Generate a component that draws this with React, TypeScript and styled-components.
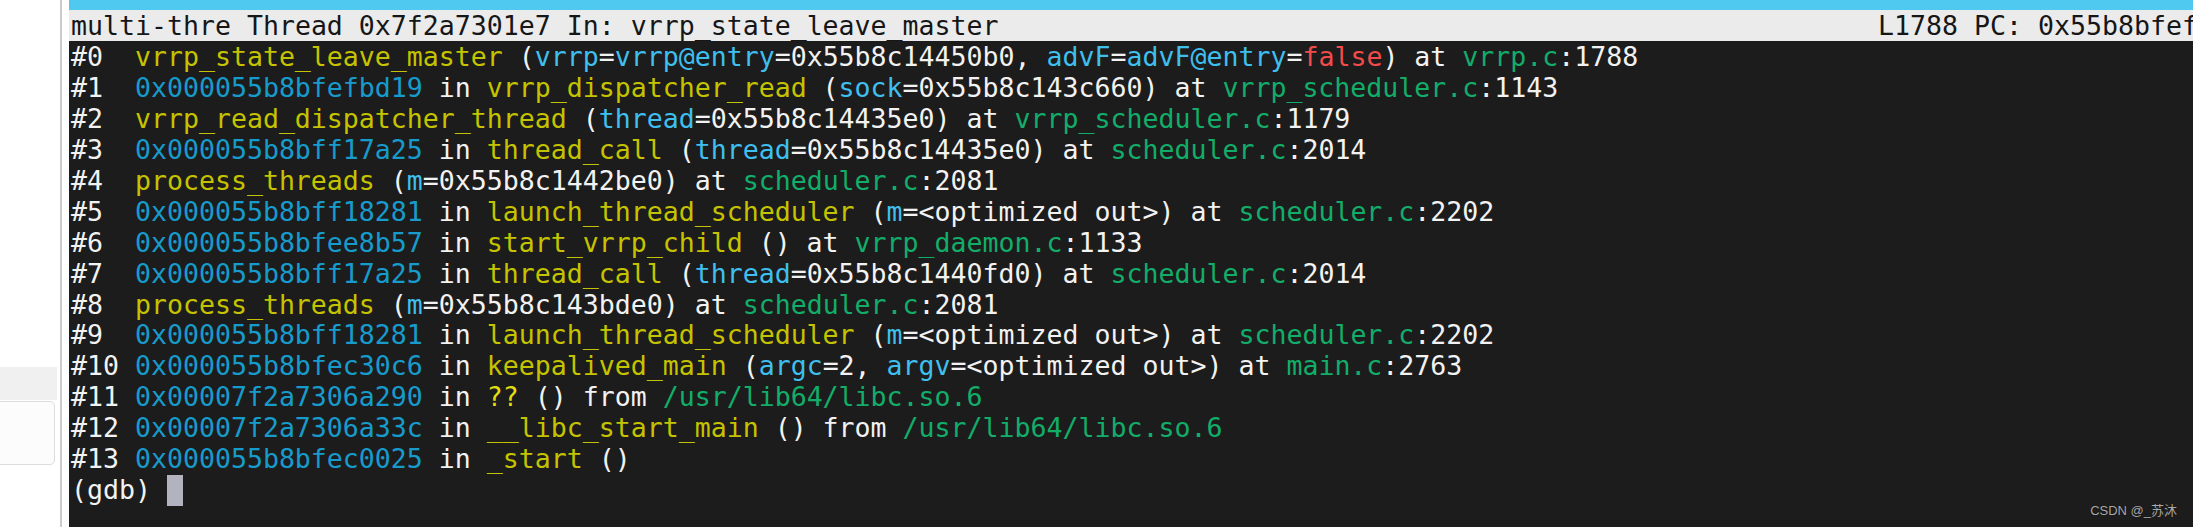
import React from "react";
import styled, { createGlobalStyle } from "styled-components";

const Global = createGlobalStyle`
  html, body { margin: 0; padding: 0; overflow: hidden; background: #ffffff; }
  #root { width: 2193px; height: 527px; }
`;

type Tone = "plain" | "func" | "addr" | "arg" | "file" | "bad" | "unknown";

const toneColor: Record<Tone, string> = {
  plain: "#f2f2f2",
  func: "#c5c300",
  addr: "#179bcc",
  arg: "#3fbfee",
  file: "#13ad6a",
  bad: "#f24b4b",
  unknown: "#e0de10",
};

const Page = styled.div`
  display: flex;
  width: 2193px;
  height: 527px;
  overflow: hidden;
`;

const Sidebar = styled.aside`
  display: flex;
  flex: 0 0 69px;
  background: #ffffff;
`;

const SideContent = styled.div`
  display: flex;
  flex-direction: column;
  width: 60px;
  padding-top: 367px;
  box-sizing: border-box;
`;

const SideTab = styled.div`
  width: 57px;
  height: 33px;
  background: #f0f0f0;
`;

const SideCard = styled.div`
  margin-left: -8px;
  margin-top: 1px;
  width: 63px;
  height: 64px;
  box-sizing: border-box;
  border: 1px solid #dcdcdc;
  border-radius: 5px;
  background: #fcfcfc;
`;

const Divider = styled.div`
  flex: 0 0 2px;
  background: #cbcbcb;
`;

const Terminal = styled.main`
  position: relative;
  flex: 1 1 0;
  min-width: 0;
  display: flex;
  flex-direction: column;
  background: #1c1c1c;
  font-family: "DejaVu Sans Mono", monospace;
  font-size: 26.57px;
  line-height: 30.95px;
  overflow: hidden;
`;

const TopStripe = styled.div`
  flex: 0 0 10px;
  background: #4fc9ef;
`;

const StatusBar = styled.div`
  display: grid;
  grid-template-columns: 113ch auto;
  height: 31px;
  line-height: 31px;
  padding-left: 2px;
  background: #ebebeb;
  color: #161616;
  white-space: pre;
`;

const Output = styled.div`
  display: flex;
  flex-direction: column;
  margin-top: 1px;
  padding-left: 2px;
`;

const Line = styled.div`
  display: flex;
  white-space: pre;
  height: 30.95px;
  color: ${toneColor.plain};
`;

const FrameNo = styled.span`
  flex: 0 0 4ch;
  color: ${toneColor.plain};
`;

const Seg = styled.span<{ $tone: Tone }>`
  color: ${(p) => toneColor[p.$tone]};
`;

const Cursor = styled.span`
  display: inline-block;
  width: 16px;
  height: 31px;
  background: #b3b3c0;
`;

const Watermark = styled.div`
  position: absolute;
  right: 16px;
  bottom: 7px;
  font-family: "Liberation Sans", "Noto Sans CJK SC", sans-serif;
  font-size: 13px;
  line-height: 18px;
  color: #a8a8a8;
  text-shadow: 0 0 1px rgba(0, 0, 0, 0.6);
`;

type S = [Tone, string];

const frames: S[][] = [
  [["func", "vrrp_state_leave_master"], ["plain", " ("], ["arg", "vrrp"], ["plain", "="], ["arg", "vrrp@entry"], ["plain", "=0x55b8c14450b0, "], ["arg", "advF"], ["plain", "="], ["arg", "advF@entry"], ["plain", "="], ["bad", "false"], ["plain", ") at "], ["file", "vrrp.c"], ["plain", ":1788"]],
  [["addr", "0x000055b8bfefbd19"], ["plain", " in "], ["func", "vrrp_dispatcher_read"], ["plain", " ("], ["arg", "sock"], ["plain", "=0x55b8c143c660) at "], ["file", "vrrp_scheduler.c"], ["plain", ":1143"]],
  [["func", "vrrp_read_dispatcher_thread"], ["plain", " ("], ["arg", "thread"], ["plain", "=0x55b8c14435e0) at "], ["file", "vrrp_scheduler.c"], ["plain", ":1179"]],
  [["addr", "0x000055b8bff17a25"], ["plain", " in "], ["func", "thread_call"], ["plain", " ("], ["arg", "thread"], ["plain", "=0x55b8c14435e0) at "], ["file", "scheduler.c"], ["plain", ":2014"]],
  [["func", "process_threads"], ["plain", " ("], ["arg", "m"], ["plain", "=0x55b8c1442be0) at "], ["file", "scheduler.c"], ["plain", ":2081"]],
  [["addr", "0x000055b8bff18281"], ["plain", " in "], ["func", "launch_thread_scheduler"], ["plain", " ("], ["arg", "m"], ["plain", "=<optimized out>) at "], ["file", "scheduler.c"], ["plain", ":2202"]],
  [["addr", "0x000055b8bfee8b57"], ["plain", " in "], ["func", "start_vrrp_child"], ["plain", " () at "], ["file", "vrrp_daemon.c"], ["plain", ":1133"]],
  [["addr", "0x000055b8bff17a25"], ["plain", " in "], ["func", "thread_call"], ["plain", " ("], ["arg", "thread"], ["plain", "=0x55b8c1440fd0) at "], ["file", "scheduler.c"], ["plain", ":2014"]],
  [["func", "process_threads"], ["plain", " ("], ["arg", "m"], ["plain", "=0x55b8c143bde0) at "], ["file", "scheduler.c"], ["plain", ":2081"]],
  [["addr", "0x000055b8bff18281"], ["plain", " in "], ["func", "launch_thread_scheduler"], ["plain", " ("], ["arg", "m"], ["plain", "=<optimized out>) at "], ["file", "scheduler.c"], ["plain", ":2202"]],
  [["addr", "0x000055b8bfec30c6"], ["plain", " in "], ["func", "keepalived_main"], ["plain", " ("], ["arg", "argc"], ["plain", "=2, "], ["arg", "argv"], ["plain", "=<optimized out>) at "], ["file", "main.c"], ["plain", ":2763"]],
  [["addr", "0x00007f2a7306a290"], ["plain", " in "], ["unknown", "??"], ["plain", " () from "], ["file", "/usr/lib64/libc.so.6"]],
  [["addr", "0x00007f2a7306a33c"], ["plain", " in "], ["func", "__libc_start_main"], ["plain", " () from "], ["file", "/usr/lib64/libc.so.6"]],
  [["addr", "0x000055b8bfec0025"], ["plain", " in "], ["func", "_start"], ["plain", " ()"]],
];

export default function App() {
  return (
    <>
      <Global />
      <Page>
        <Sidebar>
          <SideContent>
            <SideTab />
            <SideCard />
          </SideContent>
          <Divider />
        </Sidebar>
        <Terminal>
          <TopStripe />
          <StatusBar>
            <span>multi-thre Thread 0x7f2a7301e7 In: vrrp_state_leave_master</span>
            <span>L1788 PC: 0x55b8bfef</span>
          </StatusBar>
          <Output>
            {frames.map((segs, i) => (
              <Line key={i}>
                <FrameNo>{`#${i}`}</FrameNo>
                <span>
                  {segs.map(([tone, text], j) => (
                    <Seg key={j} $tone={tone}>
                      {text}
                    </Seg>
                  ))}
                </span>
              </Line>
            ))}
            <Line>
              <span>(gdb) </span>
              <Cursor />
            </Line>
          </Output>
          <Watermark>CSDN @_苏沐</Watermark>
        </Terminal>
      </Page>
    </>
  );
}
